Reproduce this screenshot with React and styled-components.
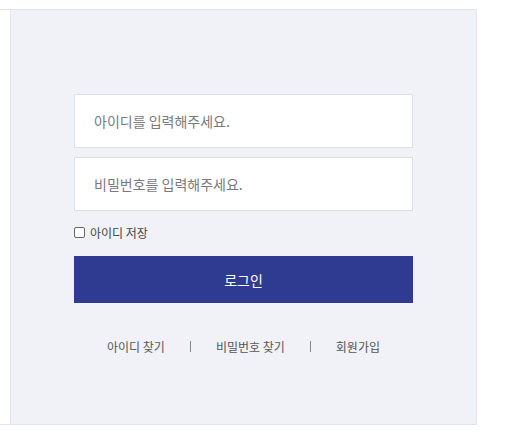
import React from "react";
import styled, { createGlobalStyle } from "styled-components";

const Global = createGlobalStyle`
    html, body {
        margin: 0;
        padding: 0;
        background: #fff;
        font-family: "Noto Sans CJK KR", "Noto Sans", sans-serif;
    }
`

const Frame = styled.div`
    width: 477px;
    margin-top: 9px;
    height: 416px;
    display: flex;
    border-top: 1px solid #e3e3ea;
    border-bottom: 1px solid #e3e3ea;
    border-right: 1px solid #e3e3ea;
    box-sizing: border-box;
`

const Side = styled.div`
    width: 10px;
    border-right: 1px solid #e3e3ea;
    background: #fff;
`

const Panel = styled.div`
    flex: 1;
    background: #f1f2f7;
    padding: 84px 0 0 63px;
    box-sizing: border-box;
`

const Form = styled.form`
    width: 339px;
    display: flex;
    flex-direction: column;
`

const Input = styled.input`
    height: 54px;
    box-sizing: border-box;
    border: 1px solid #dedfe6;
    background: #fff;
    padding: 0 0 0 19px;
    margin-bottom: ${({gap}) => gap}px;
    font-family: inherit;
    font-size: 14px;
    color: #333;
    outline: none;
    &::placeholder {
        color: #7a7a7e;
    }
`

const Save = styled.label`
    display: flex;
    align-items: center;
    gap: 5px;
    font-size: 12px;
    color: #444;
    height: 22px;
    margin-bottom: 13px;
`

const Check = styled.input`
    width: 11px;
    height: 11px;
    margin: 0;
    appearance: none;
    border: 1px solid #666;
    border-radius: 2px;
    background: #fff;
`

const Button = styled.button`
    height: 47px;
    border: none;
    background: #2f3b91;
    color: #fff;
    font-family: inherit;
    font-size: 14px;
    cursor: pointer;
`

const Links = styled.div`
    display: flex;
    justify-content: center;
    align-items: center;
    margin-top: 35px;
    font-size: 12px;
    color: #555;
`

const Link = styled.a`
    color: inherit;
    text-decoration: none;
`

const Bar = styled.span`
    width: 1px;
    height: 11px;
    background: #888;
    margin: 0 25px;
`

const App = () =>
{
    return (
        <>
            <Global />
            <Frame>
                <Side />
                <Panel>
                    <Form onSubmit={e => e.preventDefault()}>
                        <Input gap={9} placeholder="아이디를 입력해주세요." />
                        <Input gap={10} type="password" placeholder="비밀번호를 입력해주세요." />
                        <Save>
                            <Check type="checkbox" />
                            아이디 저장
                        </Save>
                        <Button type="submit">로그인</Button>
                        <Links>
                            <Link href="#">아이디 찾기</Link>
                            <Bar />
                            <Link href="#">비밀번호 찾기</Link>
                            <Bar />
                            <Link href="#">회원가입</Link>
                        </Links>
                    </Form>
                </Panel>
            </Frame>
        </>
    )
}

export default App
